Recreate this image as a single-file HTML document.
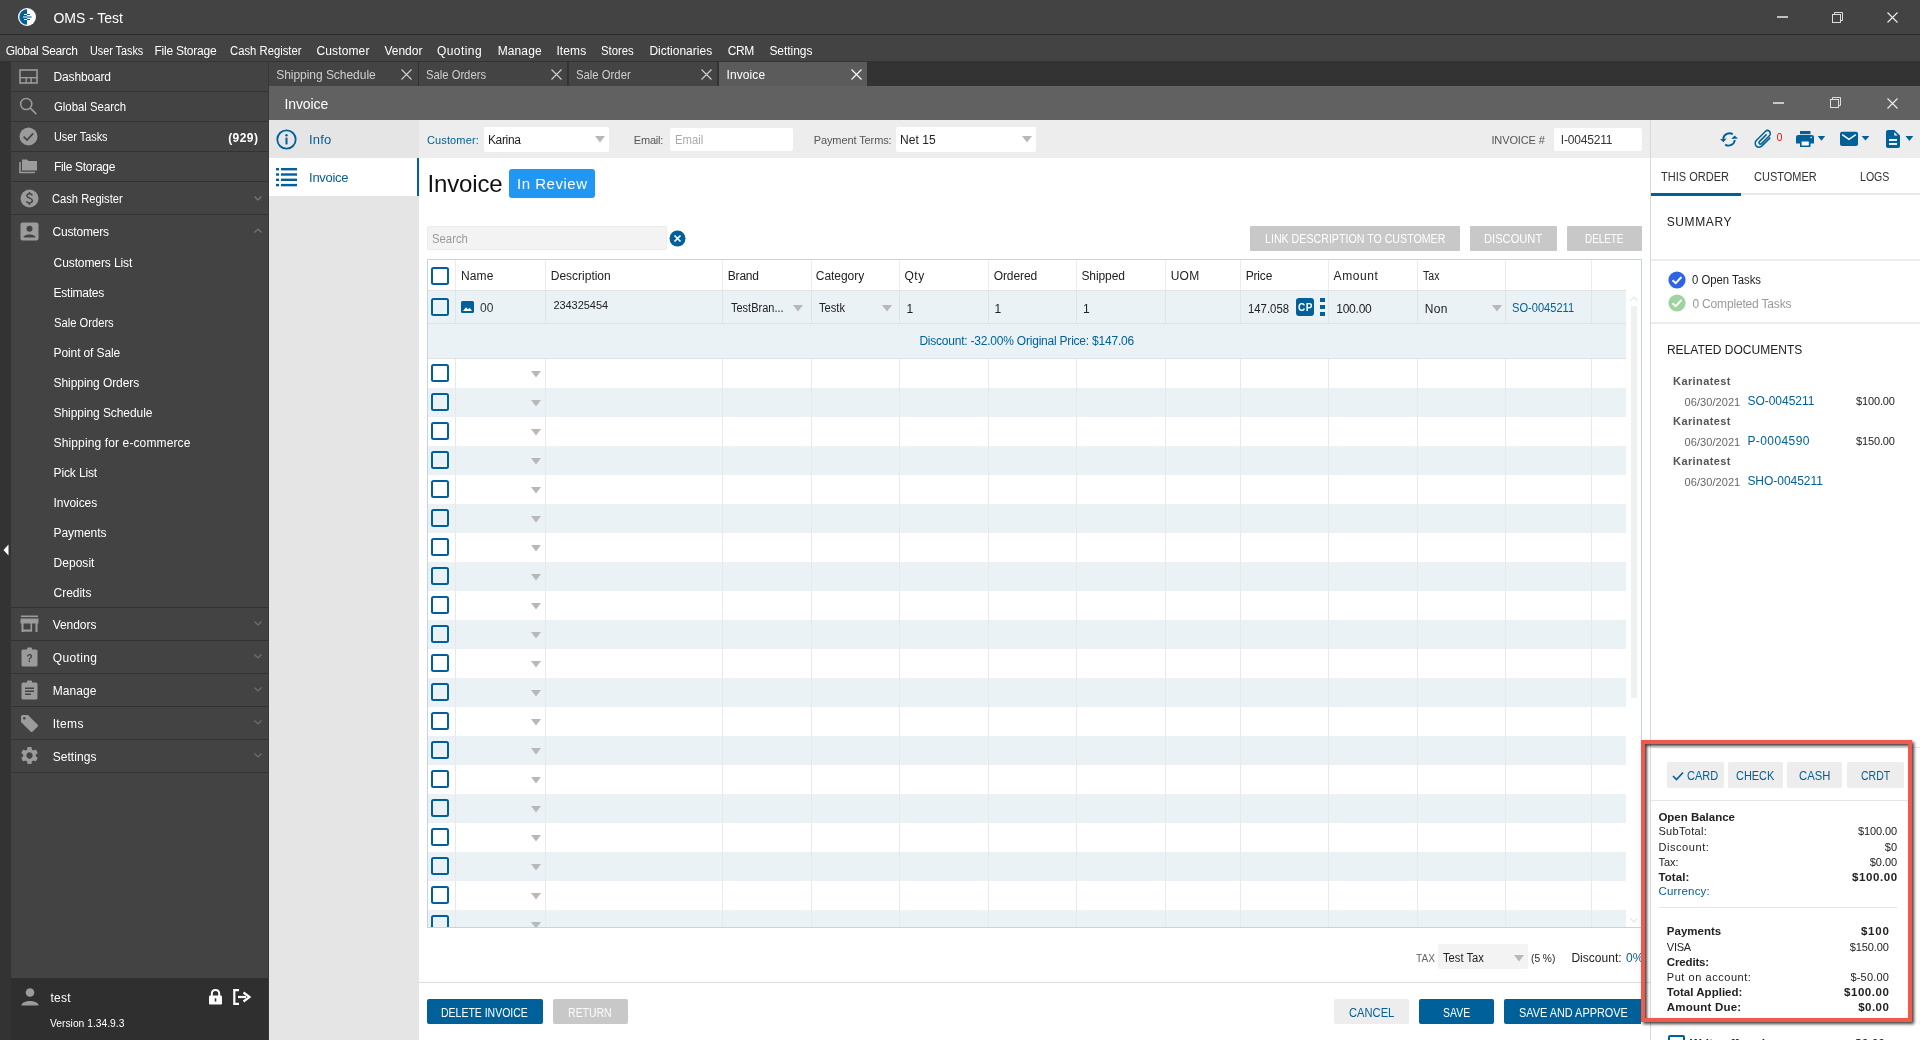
<!DOCTYPE html>
<html><head><meta charset="utf-8">
<style>
*{margin:0;padding:0;box-sizing:border-box}
html,body{width:1920px;height:1040px;overflow:hidden;background:#fff;font-family:"Liberation Sans",sans-serif;font-size:12px;color:#222}
.a{position:absolute}
.t{position:absolute;white-space:nowrap;line-height:1}
svg{position:absolute;display:block;overflow:visible}
</style></head><body><div style="position:absolute;left:0;top:0;width:1920px;height:1040px;overflow:hidden;will-change:transform">
<div class="a" style="left:0px;top:0px;width:1920px;height:34px;background:#434343;"></div><div class="a" style="left:0px;top:34px;width:1920px;height:1px;background:#2b2b2b;"></div><div class="a" style="left:0px;top:35px;width:1920px;height:26px;background:#434343;"></div><svg style="left:18px;top:8px" width="18" height="18" viewBox="0 0 18 18"><circle cx="9" cy="9" r="9" fill="#fff"/><path d="M9 1.3A7.7 7.7 0 0 0 9 16.7Z" fill="#00609a"/><rect x="6" y="6" width="3" height="1" fill="#fff"/><rect x="9" y="6" width="3" height="1" fill="#00609a"/><rect x="5" y="8.3" width="4" height="1.4" fill="#b8d0e0"/><rect x="9" y="8.3" width="4.6" height="1.4" fill="#3b80b0"/><rect x="6" y="11" width="3" height="1" fill="#fff"/><rect x="9" y="11" width="3" height="1" fill="#00609a"/></svg><div class="t" style="left:53.40px;top:11px;font-size:14px;color:#fff;font-weight:400;letter-spacing:-0.028px;">OMS - Test</div><div class="a" style="left:1777px;top:16px;width:11px;height:2px;background:#c0c0c0;"></div><svg style="left:1832px;top:12px" width="12" height="11" viewBox="0 0 12 11"><rect x="0.5" y="2.5" width="8" height="8" fill="none" stroke="#ddd"/><path d="M2.5 2.5V0.5H10.5V8.5H8.5" fill="none" stroke="#ddd"/></svg><svg style="left:1887px;top:12px" width="11" height="11" viewBox="0 0 11 11"><path d="M0.5 0.5L10.5 10.5M10.5 0.5L0.5 10.5" stroke="#eee" stroke-width="1.1"/></svg><div class="t" style="left:5.65px;top:45px;font-size:12px;color:#fff;font-weight:400;letter-spacing:-0.316px;">Global Search</div><div class="t" style="left:89.90px;top:45px;font-size:12px;color:#fff;font-weight:400;transform:scaleX(0.9006);transform-origin:0 0;">User Tasks</div><div class="t" style="left:154.40px;top:45px;font-size:12px;color:#fff;font-weight:400;letter-spacing:-0.223px;">File Storage</div><div class="t" style="left:229.65px;top:45px;font-size:12px;color:#fff;font-weight:400;transform:scaleX(0.9404);transform-origin:0 0;">Cash Register</div><div class="t" style="left:316.40px;top:45px;font-size:12px;color:#fff;font-weight:400;letter-spacing:0.141px;">Customer</div><div class="t" style="left:384.40px;top:45px;font-size:12px;color:#fff;font-weight:400;letter-spacing:-0.007px;">Vendor</div><div class="t" style="left:436.90px;top:45px;font-size:12px;color:#fff;font-weight:400;letter-spacing:0.453px;">Quoting</div><div class="t" style="left:497.65px;top:45px;font-size:12px;color:#fff;font-weight:400;letter-spacing:0.127px;">Manage</div><div class="t" style="left:556.40px;top:45px;font-size:12px;color:#fff;font-weight:400;letter-spacing:0.103px;">Items</div><div class="t" style="left:601.40px;top:45px;font-size:12px;color:#fff;font-weight:400;transform:scaleX(0.9443);transform-origin:0 0;">Stores</div><div class="t" style="left:649.40px;top:45px;font-size:12px;color:#fff;font-weight:400;letter-spacing:0.005px;">Dictionaries</div><div class="t" style="left:727.65px;top:45px;font-size:12px;color:#fff;font-weight:400;letter-spacing:-0.415px;">CRM</div><div class="t" style="left:769.40px;top:45px;font-size:12px;color:#fff;font-weight:400;letter-spacing:-0.051px;">Settings</div><div class="a" style="left:0px;top:61px;width:11px;height:979px;background:#333333;"></div><div class="a" style="left:11px;top:61px;width:258px;height:917px;background:#434343;"></div><div class="a" style="left:268px;top:61px;width:1px;height:979px;background:#383838;"></div><div class="a" style="left:11px;top:61px;width:257px;height:1px;background:#363636;"></div><div class="a" style="left:11px;top:978px;width:257px;height:62px;background:#2f2f2f;"></div><svg style="left:19px;top:69px" width="20" height="16" viewBox="0 0 20 16"><rect x="1" y="1" width="17" height="13" fill="none" stroke="#9b9b9b" stroke-width="1.6"/><rect x="1" y="8" width="17" height="1.4" fill="#9b9b9b"/><rect x="6.5" y="8" width="1.4" height="6" fill="#9b9b9b"/><rect x="11.5" y="8" width="1.4" height="6" fill="#9b9b9b"/></svg><div class="t" style="left:53.60px;top:71px;font-size:12px;color:#fff;font-weight:400;letter-spacing:-0.176px;">Dashboard</div><div class="a" style="left:11px;top:91px;width:257px;height:1px;background:#333333;"></div><svg style="left:19px;top:97px" width="20" height="20" viewBox="0 0 20 20"><circle cx="7.2" cy="7" r="5.6" fill="none" stroke="#9b9b9b" stroke-width="1.5"/><path d="M11.3 11.1L17.3 17.1" stroke="#9b9b9b" stroke-width="1.6"/></svg><div class="t" style="left:53.80px;top:101px;font-size:12px;color:#fff;font-weight:400;transform:scaleX(0.9468);transform-origin:0 0;">Global Search</div><div class="a" style="left:11px;top:121px;width:257px;height:1px;background:#333333;"></div><svg style="left:19px;top:127px" width="19" height="19" viewBox="0 0 19 19"><circle cx="9.5" cy="9.5" r="9" fill="#9b9b9b"/><path d="M4.6 9.6L8 13L14.2 6.4" fill="none" stroke="#434343" stroke-width="1.6"/></svg><div class="t" style="left:53.80px;top:131px;font-size:12px;color:#fff;font-weight:400;transform:scaleX(0.9048);transform-origin:0 0;">User Tasks</div><div class="a" style="left:11px;top:151px;width:257px;height:1px;background:#333333;"></div><svg style="left:19px;top:158px" width="20" height="16" viewBox="0 0 20 16"><path d="M3 1.5H8L9.5 3H18V12.5H3Z" fill="#9b9b9b"/><path d="M1 4V14.5H16" fill="none" stroke="#9b9b9b" stroke-width="1.6"/></svg><div class="t" style="left:53.90px;top:161px;font-size:12px;color:#fff;font-weight:400;letter-spacing:-0.291px;">File Storage</div><div class="a" style="left:11px;top:181px;width:257px;height:1px;background:#333333;"></div><svg style="left:20px;top:189px" width="19" height="19" viewBox="0 0 19 19"><circle cx="9.5" cy="9.5" r="9" fill="#9b9b9b"/><path d="M12.3 6.3C11.8 5.3 10.8 4.8 9.5 4.8C7.9 4.8 6.9 5.6 6.9 6.8C6.9 9.5 12.4 8.7 12.4 11.6C12.4 12.9 11.2 13.9 9.5 13.9C8 13.9 6.9 13.3 6.5 12.2M9.5 3V4.8M9.5 13.9V16" fill="none" stroke="#434343" stroke-width="1.5"/></svg><div class="t" style="left:52.40px;top:193px;font-size:12px;color:#fff;font-weight:400;transform:scaleX(0.9299);transform-origin:0 0;">Cash Register</div><div class="a" style="left:11px;top:214px;width:257px;height:1px;background:#333333;"></div><svg style="left:20px;top:222px" width="19" height="19" viewBox="0 0 19 19"><rect x="0.5" y="0.5" width="18" height="18" rx="2" fill="#9b9b9b"/><circle cx="9.5" cy="6.8" r="3" fill="#434343"/><path d="M3.5 15.5C3.5 11.5 15.5 11.5 15.5 15.5Z" fill="#434343"/></svg><div class="t" style="left:52.60px;top:226px;font-size:12px;color:#fff;font-weight:400;letter-spacing:-0.189px;">Customers</div><div class="t" style="left:228.15px;top:132px;font-size:12px;color:#fff;font-weight:700;letter-spacing:0.434px;">(929)</div><svg style="left:254px;top:196px" width="8" height="5" viewBox="0 0 8 5"><path d="M0.5 0.5L4 4L7.5 0.5" fill="none" stroke="#777" stroke-width="1.2"/></svg><svg style="left:254px;top:228px" width="8" height="5" viewBox="0 0 8 5"><path d="M0.5 4.5L4 1L7.5 4.5" fill="none" stroke="#777" stroke-width="1.2"/></svg><div class="t" style="left:53.60px;top:257px;font-size:12px;color:#fff;font-weight:400;letter-spacing:-0.102px;">Customers List</div><div class="t" style="left:53.60px;top:287px;font-size:12px;color:#fff;font-weight:400;letter-spacing:-0.260px;">Estimates</div><div class="t" style="left:53.60px;top:317px;font-size:12px;color:#fff;font-weight:400;transform:scaleX(0.9324);transform-origin:0 0;">Sale Orders</div><div class="t" style="left:53.60px;top:347px;font-size:12px;color:#fff;font-weight:400;letter-spacing:-0.121px;">Point of Sale</div><div class="t" style="left:53.60px;top:377px;font-size:12px;color:#fff;font-weight:400;letter-spacing:-0.080px;">Shipping Orders</div><div class="t" style="left:53.60px;top:407px;font-size:12px;color:#fff;font-weight:400;letter-spacing:-0.080px;">Shipping Schedule</div><div class="t" style="left:53.60px;top:437px;font-size:12px;color:#fff;font-weight:400;letter-spacing:0.124px;">Shipping for e-commerce</div><div class="t" style="left:53.60px;top:467px;font-size:12px;color:#fff;font-weight:400;letter-spacing:-0.135px;">Pick List</div><div class="t" style="left:53.60px;top:497px;font-size:12px;color:#fff;font-weight:400;letter-spacing:-0.060px;">Invoices</div><div class="t" style="left:53.60px;top:527px;font-size:12px;color:#fff;font-weight:400;letter-spacing:-0.080px;">Payments</div><div class="t" style="left:53.60px;top:557px;font-size:12px;color:#fff;font-weight:400;letter-spacing:0.019px;">Deposit</div><div class="t" style="left:53.60px;top:587px;font-size:12px;color:#fff;font-weight:400;letter-spacing:-0.035px;">Credits</div><div class="a" style="left:11px;top:607px;width:257px;height:1px;background:#333333;"></div><svg style="left:20px;top:615px" width="19" height="18" viewBox="0 0 19 18"><rect x="1" y="0.5" width="17" height="1.6" fill="#9b9b9b"/><path d="M0.5 3.5H18.5V8.5H0.5Z" fill="#9b9b9b"/><rect x="1.5" y="8" width="2" height="9" fill="#9b9b9b"/><rect x="15.5" y="8" width="2" height="9" fill="#9b9b9b"/><rect x="3" y="14.5" width="9" height="2.2" fill="#9b9b9b"/><rect x="10.5" y="8" width="1.6" height="8" fill="#9b9b9b"/></svg><div class="t" style="left:52.70px;top:619px;font-size:12px;color:#fff;font-weight:400;letter-spacing:-0.056px;">Vendors</div><div class="a" style="left:11px;top:640px;width:257px;height:1px;background:#333333;"></div><svg style="left:254px;top:621px" width="8" height="5" viewBox="0 0 8 5"><path d="M0.5 0.5L4 4L7.5 0.5" fill="none" stroke="#6f6f6f" stroke-width="1.2"/></svg><svg style="left:21px;top:647px" width="17" height="20" viewBox="0 0 17 20"><rect x="0.5" y="2.5" width="16" height="17" rx="1.6" fill="#9b9b9b"/><rect x="6" y="0.5" width="5" height="3" rx="1" fill="#9b9b9b"/><text x="8.5" y="15" text-anchor="middle" font-family="Liberation Sans" font-weight="700" font-size="10" fill="#434343">?</text></svg><div class="t" style="left:52.70px;top:652px;font-size:12px;color:#fff;font-weight:400;letter-spacing:0.362px;">Quoting</div><div class="a" style="left:11px;top:673px;width:257px;height:1px;background:#333333;"></div><svg style="left:254px;top:654px" width="8" height="5" viewBox="0 0 8 5"><path d="M0.5 0.5L4 4L7.5 0.5" fill="none" stroke="#6f6f6f" stroke-width="1.2"/></svg><svg style="left:21px;top:680px" width="17" height="20" viewBox="0 0 17 20"><rect x="0.5" y="2.5" width="16" height="17" rx="1.6" fill="#9b9b9b"/><rect x="6" y="0.5" width="5" height="3" rx="1" fill="#9b9b9b"/><rect x="4" y="7.5" width="9" height="1.5" fill="#434343"/><rect x="4" y="10.5" width="9" height="1.5" fill="#434343"/><rect x="4" y="13.5" width="6" height="1.5" fill="#434343"/></svg><div class="t" style="left:52.70px;top:685px;font-size:12px;color:#fff;font-weight:400;letter-spacing:0.067px;">Manage</div><div class="a" style="left:11px;top:706px;width:257px;height:1px;background:#333333;"></div><svg style="left:254px;top:687px" width="8" height="5" viewBox="0 0 8 5"><path d="M0.5 0.5L4 4L7.5 0.5" fill="none" stroke="#6f6f6f" stroke-width="1.2"/></svg><svg style="left:20px;top:714px" width="19" height="19" viewBox="0 0 19 19"><path d="M1 2.5V8L10.5 17.5C11.2 18.2 12 18.2 12.7 17.5L17.5 12.7C18.2 12 18.2 11.2 17.5 10.5L8 1H2.5C1.7 1 1 1.7 1 2.5Z" fill="#9b9b9b"/><circle cx="4.3" cy="4.3" r="1.3" fill="#434343"/></svg><div class="t" style="left:52.70px;top:718px;font-size:12px;color:#fff;font-weight:400;letter-spacing:0.340px;">Items</div><div class="a" style="left:11px;top:739px;width:257px;height:1px;background:#333333;"></div><svg style="left:254px;top:720px" width="8" height="5" viewBox="0 0 8 5"><path d="M0.5 0.5L4 4L7.5 0.5" fill="none" stroke="#6f6f6f" stroke-width="1.2"/></svg><svg style="left:19px;top:745px" width="21" height="21" viewBox="0 0 24 24"><path fill="#9b9b9b" d="M19.14 12.94c.04-.3.06-.61.06-.94 0-.32-.02-.64-.07-.94l2.030-1.58c.18-.14.23-.41.12-.61l-1.92-3.32c-.12-.22-.37-.29-.59-.22l-2.39.96c-.5-.38-1.03-.7-1.62-.94l-.36-2.54c-.04-.24-.24-.41-.48-.41h-3.84c-.24 0-.43.17-.47.41l-.36 2.54c-.59.24-1.13.57-1.62.94l-2.39-.96c-.22-.08-.47 0-.59.22L2.74 8.87c-.12.21-.08.47.12.61l2.03 1.58c-.05.3-.09.63-.09.94s.02.64.07.94l-2.03 1.58c-.18.14-.23.41-.12.61l1.92 3.32c.12.22.37.29.59.22l2.39-.96c.5.38 1.03.7 1.62.94l.36 2.54c.05.24.24.41.48.41h3.84c.24 0 .44-.17.47-.41l.36-2.54c.59-.24 1.13-.56 1.62-.94l2.39.96c.22.08.47 0 .59-.22l1.92-3.32c.12-.22.07-.47-.12-.61l-2.01-1.58zM12 15.6c-1.98 0-3.6-1.620-3.6-3.6s1.62-3.6 3.6-3.6 3.6 1.62 3.6 3.6-1.62 3.6-3.6 3.6z"/></svg><div class="t" style="left:52.70px;top:751px;font-size:12px;color:#fff;font-weight:400;letter-spacing:0.049px;">Settings</div><div class="a" style="left:11px;top:772px;width:257px;height:1px;background:#333333;"></div><svg style="left:254px;top:753px" width="8" height="5" viewBox="0 0 8 5"><path d="M0.5 0.5L4 4L7.5 0.5" fill="none" stroke="#6f6f6f" stroke-width="1.2"/></svg><svg style="left:3px;top:544px" width="6" height="12" viewBox="0 0 6 12"><path d="M5.5 0.5V11.5L0.5 6Z" fill="#fff"/></svg><svg style="left:20px;top:987px" width="20" height="20" viewBox="0 0 20 20"><circle cx="10" cy="5.5" r="4.3" fill="#9b9b9b"/><path d="M1.5 18.5C1.5 12.5 18.5 12.5 18.5 18.5Z" fill="#9b9b9b"/></svg><div class="t" style="left:50.40px;top:992px;font-size:12px;color:#fff;font-weight:400;letter-spacing:0.319px;">test</div><div class="t" style="left:50.40px;top:1018px;font-size:11px;color:#fff;font-weight:400;transform:scaleX(0.9358);transform-origin:0 0;">Version 1.34.9.3</div><svg style="left:208px;top:989px" width="15" height="16" viewBox="0 0 15 16"><path d="M3.8 7V4.8C3.8 2.5 5.3 1 7.5 1S11.2 2.5 11.2 4.8V7" fill="none" stroke="#fff" stroke-width="2"/><rect x="1" y="6.5" width="13" height="9" rx="1.2" fill="#fff"/><rect x="6.7" y="9.3" width="1.6" height="3.2" fill="#2f2f2f"/></svg><svg style="left:233px;top:989px" width="18" height="16" viewBox="0 0 18 16"><path d="M6 1.2H1.3V14.8H6" fill="none" stroke="#fff" stroke-width="2.2"/><path d="M5 8H13" stroke="#fff" stroke-width="2.2"/><path d="M10.5 3.5L16.5 8L10.5 12.5" fill="none" stroke="#fff" stroke-width="2.2"/></svg><div class="a" style="left:269px;top:61px;width:1651px;height:25px;background:#333333;"></div><div class="a" style="left:269px;top:62px;width:149px;height:24px;background:#444444;"></div><div class="t" style="left:276.20px;top:69px;font-size:12px;color:#cfcfcf;font-weight:400;letter-spacing:-0.036px;">Shipping Schedule</div><svg style="left:401px;top:69px" width="11" height="11" viewBox="0 0 11 11"><path d="M0.5 0.5L10.5 10.5M10.5 0.5L0.5 10.5" stroke="#d0d0d0" stroke-width="1.1"/></svg><div class="a" style="left:419px;top:62px;width:148px;height:24px;background:#444444;"></div><div class="t" style="left:426.40px;top:69px;font-size:12px;color:#cfcfcf;font-weight:400;transform:scaleX(0.9371);transform-origin:0 0;">Sale Orders</div><svg style="left:550.6px;top:69px" width="11" height="11" viewBox="0 0 11 11"><path d="M0.5 0.5L10.5 10.5M10.5 0.5L0.5 10.5" stroke="#d0d0d0" stroke-width="1.1"/></svg><div class="a" style="left:569px;top:62px;width:148px;height:24px;background:#444444;"></div><div class="t" style="left:576.40px;top:69px;font-size:12px;color:#cfcfcf;font-weight:400;transform:scaleX(0.9427);transform-origin:0 0;">Sale Order</div><svg style="left:700.7px;top:69px" width="11" height="11" viewBox="0 0 11 11"><path d="M0.5 0.5L10.5 10.5M10.5 0.5L0.5 10.5" stroke="#d0d0d0" stroke-width="1.1"/></svg><div class="a" style="left:719px;top:62px;width:148px;height:24px;background:#5b5b5b;"></div><div class="t" style="left:726.60px;top:69px;font-size:12px;color:#fff;font-weight:400;letter-spacing:0.080px;">Invoice</div><svg style="left:851px;top:69px" width="11" height="11" viewBox="0 0 11 11"><path d="M0.5 0.5L10.5 10.5M10.5 0.5L0.5 10.5" stroke="#fff" stroke-width="1.1"/></svg><div class="a" style="left:269px;top:86px;width:1651px;height:34px;background:#616161;"></div><div class="t" style="left:284.40px;top:97px;font-size:14px;color:#fff;font-weight:400;letter-spacing:-0.093px;">Invoice</div><div class="a" style="left:1773px;top:102px;width:11px;height:2px;background:#c8c8c8;"></div><svg style="left:1830px;top:97px" width="12" height="11" viewBox="0 0 12 11"><rect x="0.5" y="2.5" width="8" height="8" fill="none" stroke="#ddd"/><path d="M2.5 2.5V0.5H10.5V8.5H8.5" fill="none" stroke="#ddd"/></svg><svg style="left:1887px;top:98px" width="11" height="11" viewBox="0 0 11 11"><path d="M0.5 0.5L10.5 10.5M10.5 0.5L0.5 10.5" stroke="#eee" stroke-width="1.1"/></svg><div class="a" style="left:269px;top:120px;width:150px;height:920px;background:#e5e5e5;"></div><div class="a" style="left:269px;top:158px;width:148px;height:38px;background:#fff;"></div><div class="a" style="left:417px;top:158px;width:2px;height:38px;background:#00609a;"></div><svg style="left:276px;top:129px" width="21" height="21" viewBox="0 0 21 21"><circle cx="10.5" cy="10.5" r="9.2" fill="none" stroke="#00609a" stroke-width="1.8"/><rect x="9.5" y="8.6" width="2" height="6.8" fill="#00609a"/><circle cx="10.5" cy="6.3" r="1.2" fill="#00609a"/></svg><div class="t" style="left:309.10px;top:133px;font-size:13px;color:#00609a;font-weight:400;letter-spacing:0.139px;">Info</div><svg style="left:276px;top:167px" width="21" height="20" viewBox="0 0 21 20"><rect x="0" y="1" width="3" height="2.4" fill="#00609a"/><rect x="0" y="6.3" width="3" height="2.4" fill="#00609a"/><rect x="0" y="11.6" width="3" height="2.4" fill="#00609a"/><rect x="0" y="16.9" width="3" height="2.4" fill="#00609a"/><rect x="5" y="1" width="16" height="2.4" fill="#00609a"/><rect x="5" y="6.3" width="16" height="2.4" fill="#00609a"/><rect x="5" y="11.6" width="16" height="2.4" fill="#00609a"/><rect x="5" y="16.9" width="16" height="2.4" fill="#00609a"/></svg><div class="t" style="left:309.10px;top:171px;font-size:13px;color:#00609a;font-weight:400;letter-spacing:-0.315px;">Invoice</div><div class="a" style="left:419px;top:120px;width:1231px;height:38px;background:#ededed;"></div><div class="t" style="left:426.90px;top:135px;font-size:11px;color:#00609a;font-weight:400;letter-spacing:0.145px;">Customer:</div><div class="a" style="left:484px;top:127px;width:125px;height:25px;background:#fff;border-radius:2px"></div><div class="t" style="left:487.90px;top:134px;font-size:12px;color:#222;font-weight:400;letter-spacing:-0.318px;">Karina</div><svg style="left:595px;top:136px" width="10" height="7" viewBox="0 0 10 7"><path d="M0 0H10L5 6.5Z" fill="#b8b8b8"/></svg><div class="t" style="left:633.80px;top:135px;font-size:11px;color:#555;font-weight:400;letter-spacing:-0.193px;">Email:</div><div class="a" style="left:670px;top:128px;width:123px;height:23px;background:#fff;border-radius:2px"></div><div class="t" style="left:675.00px;top:134px;font-size:12px;color:#aaa;font-weight:400;transform:scaleX(0.9464);transform-origin:0 0;">Email</div><div class="t" style="left:813.70px;top:135px;font-size:11px;color:#555;font-weight:400;letter-spacing:-0.098px;">Payment Terms:</div><div class="a" style="left:896px;top:127px;width:140px;height:25px;background:#fff;border-radius:2px"></div><div class="t" style="left:899.90px;top:134px;font-size:12px;color:#222;font-weight:400;letter-spacing:0.089px;">Net 15</div><svg style="left:1022px;top:136px" width="10" height="7" viewBox="0 0 10 7"><path d="M0 0H10L5 6.5Z" fill="#b8b8b8"/></svg><div class="t" style="left:1491.40px;top:135px;font-size:11px;color:#555;font-weight:400;letter-spacing:-0.113px;">INVOICE #</div><div class="a" style="left:1554px;top:128px;width:88px;height:23px;background:#fff;border-radius:2px"></div><div class="t" style="left:1560.80px;top:134px;font-size:12px;color:#333;font-weight:400;letter-spacing:-0.195px;">I-0045211</div><div class="t" style="left:427.60px;top:172px;font-size:24px;color:#111;font-weight:400;letter-spacing:-0.174px;">Invoice</div><div class="a" style="left:509px;top:169px;width:86px;height:29px;background:#2196f3;border-radius:3px"></div><div class="t" style="left:517.10px;top:176px;font-size:15px;color:#fff;font-weight:400;letter-spacing:0.505px;">In Review</div><div class="a" style="left:427px;top:226px;width:240px;height:24px;background:#f3f3f3;border-radius:2px;border:1px solid #ececec"></div><div class="t" style="left:432.40px;top:233px;font-size:12px;color:#9a9a9a;font-weight:400;transform:scaleX(0.9442);transform-origin:0 0;">Search</div><svg style="left:669px;top:230px" width="17" height="17" viewBox="0 0 17 17"><circle cx="8.5" cy="8.5" r="8" fill="#00609a"/><path d="M5.5 5.5L11.5 11.5M11.5 5.5L5.5 11.5" stroke="#fff" stroke-width="1.7"/></svg><div class="a" style="left:1250px;top:226px;width:210px;height:25px;background:#c8c8c8;border-radius:1px"></div><div class="t" style="left:1265.00px;top:233px;font-size:12px;color:#fff;font-weight:400;transform:scaleX(0.8870);transform-origin:0 0;">LINK DESCRIPTION TO CUSTOMER</div><div class="a" style="left:1470px;top:226px;width:87px;height:25px;background:#c8c8c8;border-radius:1px"></div><div class="t" style="left:1484.40px;top:233px;font-size:12px;color:#fff;font-weight:400;transform:scaleX(0.9287);transform-origin:0 0;">DISCOUNT</div><div class="a" style="left:1567px;top:226px;width:75px;height:25px;background:#c8c8c8;border-radius:1px"></div><div class="t" style="left:1585.40px;top:233px;font-size:12px;color:#fff;font-weight:400;transform:scaleX(0.8226);transform-origin:0 0;">DELETE</div><div class="a" style="left:427px;top:259px;width:1215px;height:669px;background:#fff;border:1px solid #c9d3da"></div><div class="a" style="left:428px;top:291px;width:1198px;height:67px;background:#ebf2f6;"></div><div class="a" style="left:428px;top:290px;width:1198px;height:1px;background:#e2e2e2;"></div><div class="a" style="left:428px;top:323px;width:1198px;height:1px;background:#dde3e7;"></div><div class="a" style="left:428px;top:358px;width:1198px;height:1px;background:#dde3e7;"></div><div class="a" style="left:428px;top:388px;width:1198px;height:29px;background:#ebf2f6;"></div><div class="a" style="left:428px;top:446px;width:1198px;height:29px;background:#ebf2f6;"></div><div class="a" style="left:428px;top:504px;width:1198px;height:29px;background:#ebf2f6;"></div><div class="a" style="left:428px;top:562px;width:1198px;height:29px;background:#ebf2f6;"></div><div class="a" style="left:428px;top:620px;width:1198px;height:29px;background:#ebf2f6;"></div><div class="a" style="left:428px;top:678px;width:1198px;height:29px;background:#ebf2f6;"></div><div class="a" style="left:428px;top:736px;width:1198px;height:29px;background:#ebf2f6;"></div><div class="a" style="left:428px;top:794px;width:1198px;height:29px;background:#ebf2f6;"></div><div class="a" style="left:428px;top:852px;width:1198px;height:29px;background:#ebf2f6;"></div><div class="a" style="left:428px;top:910px;width:1198px;height:17px;background:#ebf2f6;"></div><div class="a" style="left:455px;top:260px;width:1px;height:30px;background:#ececec;"></div><div class="a" style="left:455px;top:291px;width:1px;height:32px;background:#dfe5e9;"></div><div class="a" style="left:455px;top:359px;width:1px;height:568px;background:#e9e9e9;"></div><div class="a" style="left:545px;top:260px;width:1px;height:30px;background:#ececec;"></div><div class="a" style="left:545px;top:291px;width:1px;height:32px;background:#dfe5e9;"></div><div class="a" style="left:545px;top:359px;width:1px;height:568px;background:#e9e9e9;"></div><div class="a" style="left:722px;top:260px;width:1px;height:30px;background:#ececec;"></div><div class="a" style="left:722px;top:291px;width:1px;height:32px;background:#dfe5e9;"></div><div class="a" style="left:722px;top:359px;width:1px;height:568px;background:#e9e9e9;"></div><div class="a" style="left:811px;top:260px;width:1px;height:30px;background:#ececec;"></div><div class="a" style="left:811px;top:291px;width:1px;height:32px;background:#dfe5e9;"></div><div class="a" style="left:811px;top:359px;width:1px;height:568px;background:#e9e9e9;"></div><div class="a" style="left:899px;top:260px;width:1px;height:30px;background:#ececec;"></div><div class="a" style="left:899px;top:291px;width:1px;height:32px;background:#dfe5e9;"></div><div class="a" style="left:899px;top:359px;width:1px;height:568px;background:#e9e9e9;"></div><div class="a" style="left:988px;top:260px;width:1px;height:30px;background:#ececec;"></div><div class="a" style="left:988px;top:291px;width:1px;height:32px;background:#dfe5e9;"></div><div class="a" style="left:988px;top:359px;width:1px;height:568px;background:#e9e9e9;"></div><div class="a" style="left:1076px;top:260px;width:1px;height:30px;background:#ececec;"></div><div class="a" style="left:1076px;top:291px;width:1px;height:32px;background:#dfe5e9;"></div><div class="a" style="left:1076px;top:359px;width:1px;height:568px;background:#e9e9e9;"></div><div class="a" style="left:1165px;top:260px;width:1px;height:30px;background:#ececec;"></div><div class="a" style="left:1165px;top:291px;width:1px;height:32px;background:#dfe5e9;"></div><div class="a" style="left:1165px;top:359px;width:1px;height:568px;background:#e9e9e9;"></div><div class="a" style="left:1240px;top:260px;width:1px;height:30px;background:#ececec;"></div><div class="a" style="left:1240px;top:291px;width:1px;height:32px;background:#dfe5e9;"></div><div class="a" style="left:1240px;top:359px;width:1px;height:568px;background:#e9e9e9;"></div><div class="a" style="left:1328px;top:260px;width:1px;height:30px;background:#ececec;"></div><div class="a" style="left:1328px;top:291px;width:1px;height:32px;background:#dfe5e9;"></div><div class="a" style="left:1328px;top:359px;width:1px;height:568px;background:#e9e9e9;"></div><div class="a" style="left:1417px;top:260px;width:1px;height:30px;background:#ececec;"></div><div class="a" style="left:1417px;top:291px;width:1px;height:32px;background:#dfe5e9;"></div><div class="a" style="left:1417px;top:359px;width:1px;height:568px;background:#e9e9e9;"></div><div class="a" style="left:1505px;top:260px;width:1px;height:30px;background:#ececec;"></div><div class="a" style="left:1505px;top:291px;width:1px;height:32px;background:#dfe5e9;"></div><div class="a" style="left:1505px;top:359px;width:1px;height:568px;background:#e9e9e9;"></div><div class="a" style="left:1591px;top:260px;width:1px;height:30px;background:#ececec;"></div><div class="a" style="left:1591px;top:291px;width:1px;height:32px;background:#dfe5e9;"></div><div class="a" style="left:1591px;top:359px;width:1px;height:568px;background:#e9e9e9;"></div><div class="t" style="left:460.90px;top:270px;font-size:12px;color:#222;font-weight:400;letter-spacing:0.163px;">Name</div><div class="t" style="left:550.80px;top:270px;font-size:12px;color:#222;font-weight:400;letter-spacing:-0.013px;">Description</div><div class="t" style="left:727.80px;top:270px;font-size:12px;color:#222;font-weight:400;letter-spacing:-0.206px;">Brand</div><div class="t" style="left:815.80px;top:270px;font-size:12px;color:#222;font-weight:400;letter-spacing:-0.049px;">Category</div><div class="t" style="left:904.40px;top:270px;font-size:12px;color:#222;font-weight:400;letter-spacing:0.541px;">Qty</div><div class="t" style="left:993.65px;top:270px;font-size:12px;color:#222;font-weight:400;letter-spacing:-0.087px;">Ordered</div><div class="t" style="left:1081.40px;top:270px;font-size:12px;color:#222;font-weight:400;letter-spacing:-0.090px;">Shipped</div><div class="t" style="left:1170.65px;top:270px;font-size:12px;color:#222;font-weight:400;letter-spacing:0.252px;">UOM</div><div class="t" style="left:1245.65px;top:270px;font-size:12px;color:#222;font-weight:400;letter-spacing:-0.148px;">Price</div><div class="t" style="left:1333.60px;top:270px;font-size:12px;color:#222;font-weight:400;letter-spacing:0.589px;">Amount</div><div class="t" style="left:1423.00px;top:270px;font-size:12px;color:#222;font-weight:400;transform:scaleX(0.8782);transform-origin:0 0;">Tax</div><div class="a" style="left:431px;top:267px;width:18px;height:18px;border:2px solid #00609a;border-radius:2.5px;background:#fff"></div><div class="a" style="left:431px;top:298px;width:18px;height:18px;border:2px solid #00609a;border-radius:2.5px;background:#ebf2f6"></div><div class="a" style="left:428px;top:364px;width:30px;height:18px;overflow:hidden"><div class="a" style="left:3px;top:0px;width:18px;height:18px;border:2px solid #00609a;border-radius:2.5px;background:#fff"></div></div><div class="a" style="left:531px;top:371px;width:10px;height:7px;overflow:hidden"><svg style="left:0px;top:0px" width="10" height="7" viewBox="0 0 10 7"><path d="M0 0H10L5 6.5Z" fill="#b8b8b8"/></svg></div><div class="a" style="left:428px;top:393px;width:30px;height:18px;overflow:hidden"><div class="a" style="left:3px;top:0px;width:18px;height:18px;border:2px solid #00609a;border-radius:2.5px;background:#ebf2f6"></div></div><div class="a" style="left:531px;top:400px;width:10px;height:7px;overflow:hidden"><svg style="left:0px;top:0px" width="10" height="7" viewBox="0 0 10 7"><path d="M0 0H10L5 6.5Z" fill="#b8b8b8"/></svg></div><div class="a" style="left:428px;top:422px;width:30px;height:18px;overflow:hidden"><div class="a" style="left:3px;top:0px;width:18px;height:18px;border:2px solid #00609a;border-radius:2.5px;background:#fff"></div></div><div class="a" style="left:531px;top:429px;width:10px;height:7px;overflow:hidden"><svg style="left:0px;top:0px" width="10" height="7" viewBox="0 0 10 7"><path d="M0 0H10L5 6.5Z" fill="#b8b8b8"/></svg></div><div class="a" style="left:428px;top:451px;width:30px;height:18px;overflow:hidden"><div class="a" style="left:3px;top:0px;width:18px;height:18px;border:2px solid #00609a;border-radius:2.5px;background:#ebf2f6"></div></div><div class="a" style="left:531px;top:458px;width:10px;height:7px;overflow:hidden"><svg style="left:0px;top:0px" width="10" height="7" viewBox="0 0 10 7"><path d="M0 0H10L5 6.5Z" fill="#b8b8b8"/></svg></div><div class="a" style="left:428px;top:480px;width:30px;height:18px;overflow:hidden"><div class="a" style="left:3px;top:0px;width:18px;height:18px;border:2px solid #00609a;border-radius:2.5px;background:#fff"></div></div><div class="a" style="left:531px;top:487px;width:10px;height:7px;overflow:hidden"><svg style="left:0px;top:0px" width="10" height="7" viewBox="0 0 10 7"><path d="M0 0H10L5 6.5Z" fill="#b8b8b8"/></svg></div><div class="a" style="left:428px;top:509px;width:30px;height:18px;overflow:hidden"><div class="a" style="left:3px;top:0px;width:18px;height:18px;border:2px solid #00609a;border-radius:2.5px;background:#ebf2f6"></div></div><div class="a" style="left:531px;top:516px;width:10px;height:7px;overflow:hidden"><svg style="left:0px;top:0px" width="10" height="7" viewBox="0 0 10 7"><path d="M0 0H10L5 6.5Z" fill="#b8b8b8"/></svg></div><div class="a" style="left:428px;top:538px;width:30px;height:18px;overflow:hidden"><div class="a" style="left:3px;top:0px;width:18px;height:18px;border:2px solid #00609a;border-radius:2.5px;background:#fff"></div></div><div class="a" style="left:531px;top:545px;width:10px;height:7px;overflow:hidden"><svg style="left:0px;top:0px" width="10" height="7" viewBox="0 0 10 7"><path d="M0 0H10L5 6.5Z" fill="#b8b8b8"/></svg></div><div class="a" style="left:428px;top:567px;width:30px;height:18px;overflow:hidden"><div class="a" style="left:3px;top:0px;width:18px;height:18px;border:2px solid #00609a;border-radius:2.5px;background:#ebf2f6"></div></div><div class="a" style="left:531px;top:574px;width:10px;height:7px;overflow:hidden"><svg style="left:0px;top:0px" width="10" height="7" viewBox="0 0 10 7"><path d="M0 0H10L5 6.5Z" fill="#b8b8b8"/></svg></div><div class="a" style="left:428px;top:596px;width:30px;height:18px;overflow:hidden"><div class="a" style="left:3px;top:0px;width:18px;height:18px;border:2px solid #00609a;border-radius:2.5px;background:#fff"></div></div><div class="a" style="left:531px;top:603px;width:10px;height:7px;overflow:hidden"><svg style="left:0px;top:0px" width="10" height="7" viewBox="0 0 10 7"><path d="M0 0H10L5 6.5Z" fill="#b8b8b8"/></svg></div><div class="a" style="left:428px;top:625px;width:30px;height:18px;overflow:hidden"><div class="a" style="left:3px;top:0px;width:18px;height:18px;border:2px solid #00609a;border-radius:2.5px;background:#ebf2f6"></div></div><div class="a" style="left:531px;top:632px;width:10px;height:7px;overflow:hidden"><svg style="left:0px;top:0px" width="10" height="7" viewBox="0 0 10 7"><path d="M0 0H10L5 6.5Z" fill="#b8b8b8"/></svg></div><div class="a" style="left:428px;top:654px;width:30px;height:18px;overflow:hidden"><div class="a" style="left:3px;top:0px;width:18px;height:18px;border:2px solid #00609a;border-radius:2.5px;background:#fff"></div></div><div class="a" style="left:531px;top:661px;width:10px;height:7px;overflow:hidden"><svg style="left:0px;top:0px" width="10" height="7" viewBox="0 0 10 7"><path d="M0 0H10L5 6.5Z" fill="#b8b8b8"/></svg></div><div class="a" style="left:428px;top:683px;width:30px;height:18px;overflow:hidden"><div class="a" style="left:3px;top:0px;width:18px;height:18px;border:2px solid #00609a;border-radius:2.5px;background:#ebf2f6"></div></div><div class="a" style="left:531px;top:690px;width:10px;height:7px;overflow:hidden"><svg style="left:0px;top:0px" width="10" height="7" viewBox="0 0 10 7"><path d="M0 0H10L5 6.5Z" fill="#b8b8b8"/></svg></div><div class="a" style="left:428px;top:712px;width:30px;height:18px;overflow:hidden"><div class="a" style="left:3px;top:0px;width:18px;height:18px;border:2px solid #00609a;border-radius:2.5px;background:#fff"></div></div><div class="a" style="left:531px;top:719px;width:10px;height:7px;overflow:hidden"><svg style="left:0px;top:0px" width="10" height="7" viewBox="0 0 10 7"><path d="M0 0H10L5 6.5Z" fill="#b8b8b8"/></svg></div><div class="a" style="left:428px;top:741px;width:30px;height:18px;overflow:hidden"><div class="a" style="left:3px;top:0px;width:18px;height:18px;border:2px solid #00609a;border-radius:2.5px;background:#ebf2f6"></div></div><div class="a" style="left:531px;top:748px;width:10px;height:7px;overflow:hidden"><svg style="left:0px;top:0px" width="10" height="7" viewBox="0 0 10 7"><path d="M0 0H10L5 6.5Z" fill="#b8b8b8"/></svg></div><div class="a" style="left:428px;top:770px;width:30px;height:18px;overflow:hidden"><div class="a" style="left:3px;top:0px;width:18px;height:18px;border:2px solid #00609a;border-radius:2.5px;background:#fff"></div></div><div class="a" style="left:531px;top:777px;width:10px;height:7px;overflow:hidden"><svg style="left:0px;top:0px" width="10" height="7" viewBox="0 0 10 7"><path d="M0 0H10L5 6.5Z" fill="#b8b8b8"/></svg></div><div class="a" style="left:428px;top:799px;width:30px;height:18px;overflow:hidden"><div class="a" style="left:3px;top:0px;width:18px;height:18px;border:2px solid #00609a;border-radius:2.5px;background:#ebf2f6"></div></div><div class="a" style="left:531px;top:806px;width:10px;height:7px;overflow:hidden"><svg style="left:0px;top:0px" width="10" height="7" viewBox="0 0 10 7"><path d="M0 0H10L5 6.5Z" fill="#b8b8b8"/></svg></div><div class="a" style="left:428px;top:828px;width:30px;height:18px;overflow:hidden"><div class="a" style="left:3px;top:0px;width:18px;height:18px;border:2px solid #00609a;border-radius:2.5px;background:#fff"></div></div><div class="a" style="left:531px;top:835px;width:10px;height:7px;overflow:hidden"><svg style="left:0px;top:0px" width="10" height="7" viewBox="0 0 10 7"><path d="M0 0H10L5 6.5Z" fill="#b8b8b8"/></svg></div><div class="a" style="left:428px;top:857px;width:30px;height:18px;overflow:hidden"><div class="a" style="left:3px;top:0px;width:18px;height:18px;border:2px solid #00609a;border-radius:2.5px;background:#ebf2f6"></div></div><div class="a" style="left:531px;top:864px;width:10px;height:7px;overflow:hidden"><svg style="left:0px;top:0px" width="10" height="7" viewBox="0 0 10 7"><path d="M0 0H10L5 6.5Z" fill="#b8b8b8"/></svg></div><div class="a" style="left:428px;top:886px;width:30px;height:18px;overflow:hidden"><div class="a" style="left:3px;top:0px;width:18px;height:18px;border:2px solid #00609a;border-radius:2.5px;background:#fff"></div></div><div class="a" style="left:531px;top:893px;width:10px;height:7px;overflow:hidden"><svg style="left:0px;top:0px" width="10" height="7" viewBox="0 0 10 7"><path d="M0 0H10L5 6.5Z" fill="#b8b8b8"/></svg></div><div class="a" style="left:428px;top:915px;width:30px;height:12px;overflow:hidden"><div class="a" style="left:3px;top:0px;width:18px;height:18px;border:2px solid #00609a;border-radius:2.5px;background:#ebf2f6"></div></div><div class="a" style="left:531px;top:922px;width:10px;height:5px;overflow:hidden"><svg style="left:0px;top:0px" width="10" height="7" viewBox="0 0 10 7"><path d="M0 0H10L5 6.5Z" fill="#b8b8b8"/></svg></div><svg style="left:461px;top:301px" width="13" height="12" viewBox="0 0 13 12"><rect x="0" y="0" width="13" height="12" rx="1.5" fill="#00609a"/><path d="M2 10L5 6.2L7 8.4L8.6 6.8L11 10Z" fill="#fff"/></svg><div class="t" style="left:480.00px;top:302px;font-size:12px;color:#333;font-weight:400;letter-spacing:0.052px;">00</div><div class="t" style="left:553.40px;top:300px;font-size:11px;color:#222;font-weight:400;letter-spacing:-0.045px;">234325454</div><div class="t" style="left:731.10px;top:302px;font-size:12px;color:#222;font-weight:400;transform:scaleX(0.9170);transform-origin:0 0;">TestBran...</div><svg style="left:793px;top:305px" width="10" height="7" viewBox="0 0 10 7"><path d="M0 0H10L5 6.5Z" fill="#b8b8b8"/></svg><div class="t" style="left:818.90px;top:302px;font-size:12px;color:#222;font-weight:400;transform:scaleX(0.9283);transform-origin:0 0;">Testk</div><svg style="left:881.5px;top:305px" width="10" height="7" viewBox="0 0 10 7"><path d="M0 0H10L5 6.5Z" fill="#b8b8b8"/></svg><div class="t" style="left:906.50px;top:303px;font-size:12px;color:#222;font-weight:400;">1</div><div class="t" style="left:994.50px;top:303px;font-size:12px;color:#222;font-weight:400;">1</div><div class="t" style="left:1083.00px;top:303px;font-size:12px;color:#222;font-weight:400;">1</div><div class="t" style="left:1248.15px;top:303px;font-size:12px;color:#222;font-weight:400;transform:scaleX(0.9452);transform-origin:0 0;">147.058</div><div class="a" style="left:1296px;top:298px;width:18px;height:18px;background:#00609a;border-radius:3px"></div><div class="t" style="left:1297.90px;top:303px;font-size:10px;color:#fff;font-weight:700;letter-spacing:0.608px;">CP</div><div class="a" style="left:1320px;top:298px;width:5px;height:4px;background:#00609a;"></div><div class="a" style="left:1320px;top:305px;width:5px;height:4px;background:#00609a;"></div><div class="a" style="left:1320px;top:312px;width:5px;height:4px;background:#00609a;"></div><div class="t" style="left:1336.20px;top:303px;font-size:12px;color:#222;font-weight:400;letter-spacing:-0.221px;">100.00</div><div class="t" style="left:1424.80px;top:303px;font-size:12px;color:#222;font-weight:400;letter-spacing:0.343px;">Non</div><svg style="left:1492px;top:305px" width="10" height="7" viewBox="0 0 10 7"><path d="M0 0H10L5 6.5Z" fill="#b8b8b8"/></svg><div class="t" style="left:1511.50px;top:302px;font-size:12px;color:#00609a;font-weight:400;transform:scaleX(0.9246);transform-origin:0 0;">SO-0045211</div><div class="t" style="left:919.40px;top:335px;font-size:12px;color:#00609a;font-weight:400;letter-spacing:-0.218px;">Discount: -32.00% Original Price: $147.06</div><div class="a" style="left:1626px;top:260px;width:15px;height:667px;background:#fff;"></div><div class="a" style="left:1631px;top:306px;width:6px;height:392px;background:#f0f0f0;"></div><svg style="left:1630px;top:296px" width="8" height="5" viewBox="0 0 8 5"><path d="M0.5 4.5L4 1L7.5 4.5" fill="none" stroke="#e6e6e6" stroke-width="1.2"/></svg><svg style="left:1630px;top:918px" width="8" height="5" viewBox="0 0 8 5"><path d="M0.5 0.5L4 4L7.5 0.5" fill="none" stroke="#e6e6e6" stroke-width="1.2"/></svg><div class="t" style="left:1416.20px;top:953px;font-size:11px;color:#666;font-weight:400;transform:scaleX(0.9233);transform-origin:0 0;">TAX</div><div class="a" style="left:1438px;top:944px;width:90px;height:25px;background:#f3f3f3;border-radius:2px"></div><div class="t" style="left:1443.00px;top:952px;font-size:12px;color:#222;font-weight:400;transform:scaleX(0.9315);transform-origin:0 0;">Test Tax</div><svg style="left:1514px;top:955px" width="10" height="7" viewBox="0 0 10 7"><path d="M0 0H10L5 6.5Z" fill="#b8b8b8"/></svg><div class="t" style="left:1530.70px;top:953px;font-size:11px;color:#222;font-weight:400;transform:scaleX(0.9246);transform-origin:0 0;">(5 %)</div><div class="t" style="left:1571.40px;top:952px;font-size:12px;color:#222;font-weight:400;letter-spacing:0.022px;">Discount:</div><div class="a" style="left:1600px;top:940px;width:41px;height:30px;overflow:hidden"><div class="t" style="left:26.00px;top:12px;font-size:12px;color:#00609a;font-weight:400;">0%</div></div><div class="a" style="left:419px;top:982px;width:1231px;height:1px;background:#dcdcdc;"></div><div class="a" style="left:427px;top:999px;width:116px;height:25px;background:#00609a;border-radius:2px"></div><div class="t" style="left:441.40px;top:1007px;font-size:12px;color:#fff;font-weight:400;transform:scaleX(0.8736);transform-origin:0 0;">DELETE INVOICE</div><div class="a" style="left:553px;top:999px;width:75px;height:25px;background:#c8c8c8;border-radius:2px"></div><div class="t" style="left:568.40px;top:1007px;font-size:12px;color:#fff;font-weight:400;transform:scaleX(0.8720);transform-origin:0 0;">RETURN</div><div class="a" style="left:1334px;top:999px;width:75px;height:25px;background:#ededed;border-radius:2px"></div><div class="t" style="left:1348.70px;top:1007px;font-size:12px;color:#00609a;font-weight:400;transform:scaleX(0.9305);transform-origin:0 0;">CANCEL</div><div class="a" style="left:1419px;top:999px;width:75px;height:25px;background:#00609a;border-radius:2px"></div><div class="t" style="left:1443.30px;top:1007px;font-size:12px;color:#fff;font-weight:400;transform:scaleX(0.8706);transform-origin:0 0;">SAVE</div><div class="a" style="left:1504px;top:999px;width:137px;height:25px;background:#00609a;border-radius:2px 0 0 2px"></div><div class="t" style="left:1518.50px;top:1007px;font-size:12px;color:#fff;font-weight:400;transform:scaleX(0.9080);transform-origin:0 0;">SAVE AND APPROVE</div><div class="a" style="left:1650px;top:120px;width:1px;height:920px;background:#d8d8d8;"></div><div class="a" style="left:1651px;top:120px;width:269px;height:38px;background:#ededed;"></div><svg style="left:1719px;top:131px" width="20" height="16" viewBox="0 0 20 16"><path d="M13.8 3.2A6.3 6.3 0 0 0 4.2 7.8" fill="none" stroke="#00609a" stroke-width="1.9"/><path d="M6.2 13.6A6.3 6.3 0 0 0 15.8 9" fill="none" stroke="#00609a" stroke-width="1.9"/><path d="M1 8.2L4.5 11.2L7.6 7.6Z" fill="#00609a"/><path d="M19 7.6L15.5 4.4L12.4 8Z" fill="#00609a"/></svg><svg style="left:1754px;top:129px" width="19" height="20" viewBox="0 0 19 20"><path d="M16.3 8.6L8 16.9C6.3 18.6 3.8 18.6 2.3 17.1S0.8 13 2.5 11.3L11.3 2.5C12.5 1.3 14.4 1.3 15.5 2.4S16.6 5.5 15.4 6.7L7.5 14.6C6.9 15.2 6 15.2 5.4 14.6S4.8 13.2 5.4 12.6L12.6 5.4" fill="none" stroke="#00609a" stroke-width="1.5"/></svg><div class="t" style="left:1776.70px;top:133px;font-size:10px;color:#e00;font-weight:400;">0</div><svg style="left:1795px;top:130px" width="31" height="18" viewBox="0 0 31 18"><rect x="5" y="1" width="10.5" height="3.2" fill="#00609a"/><path d="M1 7.2C1 5.8 2 5 3.2 5H16.8C18 5 19 5.8 19 7.2V13.5H1Z" fill="#00609a"/><rect x="5" y="10" width="10.5" height="7" fill="#00609a"/><rect x="6.6" y="11.5" width="7.2" height="4" fill="#fff"/><circle cx="16.2" cy="7.5" r="0.8" fill="#fff"/><path d="M22.7 6H30.2L26.45 10.7Z" fill="#00609a"/></svg><svg style="left:1840px;top:131px" width="30" height="16" viewBox="0 0 30 16"><rect x="0" y="0.8" width="18" height="14.2" rx="2" fill="#00609a"/><path d="M2.2 3.6L9 8.3L15.8 3.6" fill="none" stroke="#fff" stroke-width="1.5"/><path d="M21.6 5H29.4L25.5 9.5Z" fill="#00609a"/></svg><svg style="left:1886px;top:129px" width="28" height="20" viewBox="0 0 28 20"><path d="M2 1H8.3L14 6.6V17C14 18.1 13.1 19 12 19H2C0.9 19 0 18.1 0 17V3C0 1.9 0.9 1 2 1Z" fill="#00609a"/><path d="M8.3 3.2L11.6 6.6H8.3Z" fill="#fff"/><rect x="3" y="10" width="8" height="1.9" fill="#fff"/><rect x="3" y="14" width="8" height="1.9" fill="#fff"/><path d="M19.5 7H27.3L23.4 11.9Z" fill="#00609a"/></svg><div class="a" style="left:1651px;top:193px;width:269px;height:2px;background:#e8e8e8;"></div><div class="a" style="left:1651px;top:193px;width:90px;height:3px;background:#00609a;"></div><div class="t" style="left:1661.40px;top:171px;font-size:12px;color:#333;font-weight:400;transform:scaleX(0.9189);transform-origin:0 0;">THIS ORDER</div><div class="t" style="left:1754.20px;top:171px;font-size:12px;color:#333;font-weight:400;transform:scaleX(0.9160);transform-origin:0 0;">CUSTOMER</div><div class="t" style="left:1860.00px;top:171px;font-size:12px;color:#333;font-weight:400;transform:scaleX(0.8817);transform-origin:0 0;">LOGS</div><div class="t" style="left:1666.70px;top:216px;font-size:12px;color:#222;font-weight:400;letter-spacing:0.613px;">SUMMARY</div><div class="a" style="left:1651px;top:259px;width:269px;height:2px;background:#ececec;"></div><svg style="left:1668px;top:271px" width="18" height="18" viewBox="0 0 18 18"><circle cx="9" cy="9" r="8.6" fill="#2e62e8"/><path d="M4.5 9.2L7.7 12.2L13.5 6" fill="none" stroke="#fff" stroke-width="1.9"/></svg><div class="t" style="left:1692.40px;top:274px;font-size:12px;color:#222;font-weight:400;transform:scaleX(0.9432);transform-origin:0 0;">0 Open Tasks</div><svg style="left:1668px;top:294px" width="18" height="18" viewBox="0 0 18 18"><circle cx="9" cy="9" r="8.6" fill="#9fd39f"/><path d="M4.5 9.2L7.7 12.2L13.5 6" fill="none" stroke="#fff" stroke-width="1.9"/></svg><div class="t" style="left:1692.40px;top:298px;font-size:12px;color:#999;font-weight:400;letter-spacing:-0.171px;">0 Completed Tasks</div><div class="a" style="left:1651px;top:322px;width:269px;height:2px;background:#ececec;"></div><div class="t" style="left:1666.90px;top:344px;font-size:12px;color:#222;font-weight:400;letter-spacing:0.017px;">RELATED DOCUMENTS</div><div class="t" style="left:1673.10px;top:376px;font-size:11px;color:#555;font-weight:700;letter-spacing:0.389px;">Karinatest</div><div class="t" style="left:1684.50px;top:397px;font-size:11px;color:#666;font-weight:400;letter-spacing:0.072px;">06/30/2021</div><div class="t" style="left:1747.40px;top:395px;font-size:12px;color:#00609a;font-weight:400;letter-spacing:-0.018px;">SO-0045211</div><div class="t" style="left:1856.00px;top:396px;font-size:11px;color:#222;font-weight:400;letter-spacing:-0.144px;">$100.00</div><div class="t" style="left:1673.10px;top:416px;font-size:11px;color:#555;font-weight:700;letter-spacing:0.389px;">Karinatest</div><div class="t" style="left:1684.50px;top:437px;font-size:11px;color:#666;font-weight:400;letter-spacing:0.072px;">06/30/2021</div><div class="t" style="left:1747.40px;top:435px;font-size:12px;color:#00609a;font-weight:400;letter-spacing:0.410px;">P-0004590</div><div class="t" style="left:1856.00px;top:436px;font-size:11px;color:#222;font-weight:400;letter-spacing:-0.144px;">$150.00</div><div class="t" style="left:1673.10px;top:456px;font-size:11px;color:#555;font-weight:700;letter-spacing:0.389px;">Karinatest</div><div class="t" style="left:1684.50px;top:477px;font-size:11px;color:#666;font-weight:400;letter-spacing:0.072px;">06/30/2021</div><div class="t" style="left:1747.40px;top:475px;font-size:12px;color:#00609a;font-weight:400;letter-spacing:-0.033px;">SHO-0045211</div><div class="a" style="left:1651px;top:744px;width:269px;height:296px;background:#fff;"></div><div class="a" style="left:1651px;top:747px;width:269px;height:1px;background:#e6e6e6;"></div><div class="a" style="left:1667px;top:762px;width:57px;height:26px;background:#ededed;border-radius:2px"></div><svg style="left:1672px;top:771px" width="12" height="10" viewBox="0 0 12 10"><path d="M1 5L4.5 8.5L11 1.5" fill="none" stroke="#00609a" stroke-width="1.6"/></svg><div class="t" style="left:1686.90px;top:770px;font-size:12px;color:#00609a;font-weight:400;transform:scaleX(0.9205);transform-origin:0 0;">CARD</div><div class="a" style="left:1728px;top:762px;width:55px;height:26px;background:#ededed;border-radius:2px"></div><div class="t" style="left:1736.00px;top:770px;font-size:12px;color:#00609a;font-weight:400;transform:scaleX(0.9117);transform-origin:0 0;">CHECK</div><div class="a" style="left:1787px;top:762px;width:55px;height:26px;background:#ededed;border-radius:2px"></div><div class="t" style="left:1798.90px;top:770px;font-size:12px;color:#00609a;font-weight:400;transform:scaleX(0.9388);transform-origin:0 0;">CASH</div><div class="a" style="left:1847px;top:762px;width:57px;height:26px;background:#ededed;border-radius:2px"></div><div class="t" style="left:1860.70px;top:770px;font-size:12px;color:#00609a;font-weight:400;transform:scaleX(0.8731);transform-origin:0 0;">CRDT</div><div class="a" style="left:1651px;top:800px;width:260px;height:1px;background:#e6e6e6;"></div><div class="t" style="left:1658.40px;top:812px;font-size:11.5px;color:#222;font-weight:700;letter-spacing:-0.009px;">Open Balance</div><div class="t" style="left:1658.40px;top:826px;font-size:11px;color:#222;font-weight:400;letter-spacing:0.329px;">SubTotal:</div><div class="t" style="left:1857.90px;top:826px;font-size:11px;color:#222;font-weight:400;letter-spacing:-0.077px;">$100.00</div><div class="t" style="left:1658.40px;top:842px;font-size:11px;color:#222;font-weight:400;letter-spacing:0.581px;">Discount:</div><div class="t" style="left:1884.80px;top:842px;font-size:11px;color:#222;font-weight:400;letter-spacing:0.164px;">$0</div><div class="t" style="left:1658.40px;top:857px;font-size:11px;color:#222;font-weight:400;letter-spacing:0.009px;">Tax:</div><div class="t" style="left:1869.70px;top:857px;font-size:11px;color:#222;font-weight:400;letter-spacing:-0.007px;">$0.00</div><div class="t" style="left:1658.40px;top:872px;font-size:11.5px;color:#222;font-weight:700;letter-spacing:0.091px;">Total:</div><div class="t" style="left:1852.10px;top:872px;font-size:11.5px;color:#222;font-weight:700;letter-spacing:0.588px;">$100.00</div><div class="t" style="left:1658.40px;top:886px;font-size:11.5px;color:#00609a;font-weight:400;letter-spacing:0.181px;">Currency:</div><div class="a" style="left:1659px;top:907px;width:238px;height:1px;background:#e6e6e6;"></div><div class="t" style="left:1666.80px;top:926px;font-size:11.5px;color:#222;font-weight:700;letter-spacing:0.009px;">Payments</div><div class="t" style="left:1860.90px;top:926px;font-size:11.5px;color:#222;font-weight:700;letter-spacing:0.805px;">$100</div><div class="t" style="left:1666.80px;top:942px;font-size:11px;color:#222;font-weight:400;letter-spacing:-0.223px;">VISA</div><div class="t" style="left:1849.70px;top:942px;font-size:11px;color:#222;font-weight:400;letter-spacing:-0.094px;">$150.00</div><div class="t" style="left:1666.80px;top:957px;font-size:11.5px;color:#222;font-weight:700;letter-spacing:-0.150px;">Credits:</div><div class="t" style="left:1666.80px;top:972px;font-size:11px;color:#222;font-weight:400;letter-spacing:0.547px;">Put on account:</div><div class="t" style="left:1850.40px;top:972px;font-size:11px;color:#222;font-weight:400;letter-spacing:0.199px;">$-50.00</div><div class="t" style="left:1666.80px;top:987px;font-size:11.5px;color:#222;font-weight:700;letter-spacing:0.017px;">Total Applied:</div><div class="t" style="left:1844.00px;top:987px;font-size:11.5px;color:#222;font-weight:700;letter-spacing:0.555px;">$100.00</div><div class="t" style="left:1666.80px;top:1002px;font-size:11.5px;color:#222;font-weight:700;letter-spacing:0.221px;">Amount Due:</div><div class="t" style="left:1858.20px;top:1002px;font-size:11.5px;color:#222;font-weight:700;letter-spacing:0.480px;">$0.00</div><div class="a" style="left:1668px;top:1035px;width:17px;height:10px;border:2px solid #00609a;border-radius:2px"></div><div class="t" style="left:1690.00px;top:1038px;font-size:12px;color:#222;font-weight:700;">Write off cash</div><div class="t" style="left:1855.00px;top:1038px;font-size:12px;color:#222;font-weight:700;">$0.00</div><div class="a" style="left:1641px;top:740px;width:271px;height:282px;border:4px solid #ef5a4c;box-shadow:2px 2px 3px rgba(0,0,0,0.75), inset 2px 2px 3px rgba(0,0,0,0.75)"></div>
</div></body></html>
